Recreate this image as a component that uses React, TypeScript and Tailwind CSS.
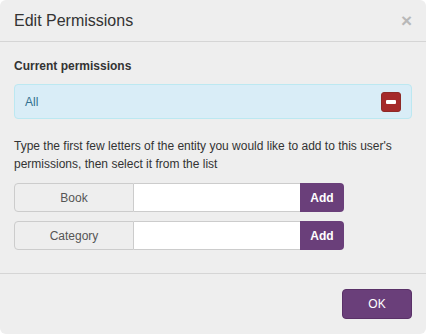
export default function App() {
  return (
    <div className="h-[334px] w-[426px] bg-white [font-family:'Liberation_Sans',Arial,sans-serif] text-[12px] text-[#333]">
      <div className="flex h-full flex-col rounded-[6px] bg-[#eeeeee]">
        <header className="flex h-[42px] items-center justify-between border-b border-[#d5d5d5] pl-[14px] pr-[14px]">
          <h1 className="pt-[1px] text-[16px] leading-none text-[#333]">Edit Permissions</h1>
          <button type="button" className="text-[19px] font-bold leading-none text-[#b8b8b8]">
            ×
          </button>
        </header>

        <div className="flex-1 px-[14px] pt-[15px]">
          <p className="font-bold leading-[18px]">Current permissions</p>
          <div className="mt-[9px] flex h-[35px] items-center justify-between rounded-[4px] border border-[#bce8f1] bg-[#d9edf7] pl-[10px] pr-[10px]">
            <span className="text-[#31708f]">All</span>
            <button
              type="button"
              className="flex h-[20px] w-[20px] items-center justify-center rounded-[3px] border border-[#8e2a27] bg-[#a52a2a]"
            >
              <span className="block h-[4px] w-[10px] rounded-[1px] bg-white" />
            </button>
          </div>

          <p className="mt-[18px] leading-[18px]">
            Type the first few letters of the entity you would like to add to this user's permissions, then select it from the list
          </p>

          <div className="mt-[10px] flex flex-col gap-[9px]">
            {["Book", "Category"].map((label) => (
              <div key={label} className="flex h-[29px] w-[330px]">
                <div className="flex w-[120px] items-center justify-center rounded-l-[4px] border border-[#cccccc] bg-[#eeeeee] text-[#555]">
                  {label}
                </div>
                <input className="h-full w-[166px] border-y border-[#cccccc] bg-white px-2 outline-none" />
                <button
                  type="button"
                  className="w-[44px] rounded-r-[4px] bg-[#6a3f7a] font-bold text-white"
                >
                  Add
                </button>
              </div>
            ))}
          </div>
        </div>

        <footer className="flex h-[61px] items-center justify-end border-t border-[#d5d5d5] px-[14px]">
          <button
            type="button"
            className="mb-[1px] h-[30px] w-[70px] rounded-[4px] border border-[#5a3168] bg-[#6a3f7a] text-white"
          >
            OK
          </button>
        </footer>
      </div>
    </div>
  );
}
